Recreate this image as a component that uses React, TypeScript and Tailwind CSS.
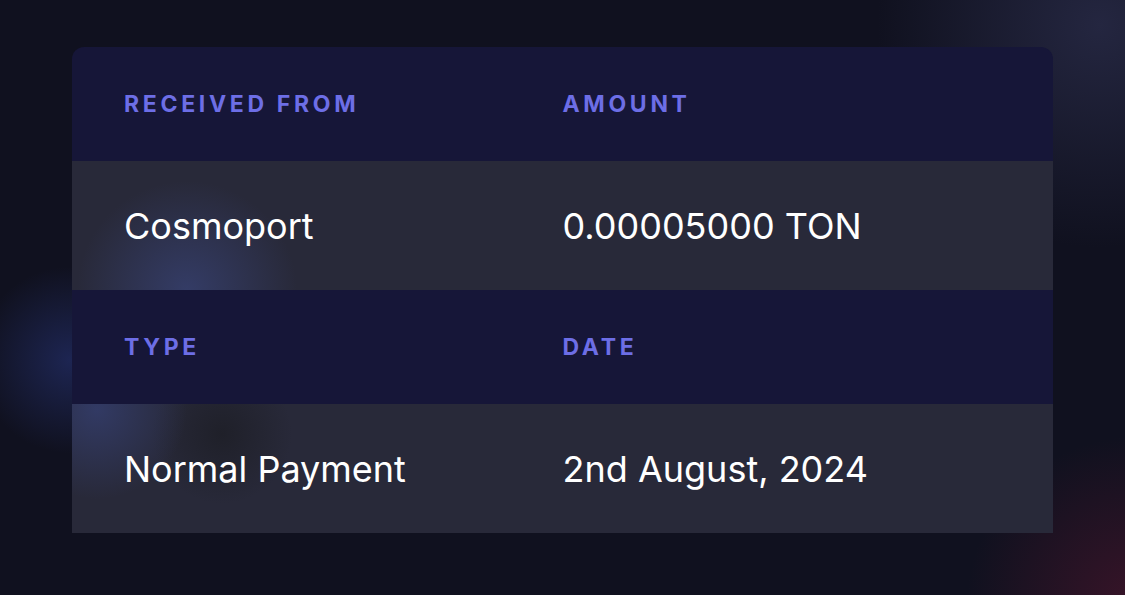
import React from 'react';

// --- Data ---
const sections = [
  {
    left: { label: 'Received From', value: 'Cosmoport' },
    right: { label: 'Amount', value: '0.00005000 TON' },
    glow: 'bg-[radial-gradient(circle_110px_at_115px_130px,_#343c66_0%,_transparent_100%)]',
  },
  {
    left: { label: 'Type', value: 'Normal Payment' },
    right: { label: 'Date', value: '2nd August, 2024' },
    glow: 'bg-[radial-gradient(circle_90px_at_25px_5px,_#323a64_0%,_transparent_100%),radial-gradient(circle_70px_at_150px_30px,_#1f2029_0%,_transparent_100%)]',
  },
];

const font = { fontFamily: 'Inter, "Noto Sans", sans-serif' };

// --- Rows ---
const HeaderRow = ({ left, right }: { left: string; right: string }) => (
  <div className="grid grid-cols-2 h-[114px] items-center bg-[#161638] px-[52px]">
    <span className="text-[23px] font-bold uppercase tracking-[0.16em] text-[#6d6ee6]">{left}</span>
    <span className="text-[23px] font-bold uppercase tracking-[0.16em] text-[#6d6ee6]">{right}</span>
  </div>
);

const ValueRow = ({ left, right, glow }: { left: string; right: string; glow: string }) => (
  <div className="bg-[#282939]">
    <div className={`grid grid-cols-2 h-[129px] items-center px-[52px] ${glow}`}>
      <span className="text-[36px] text-white">{left}</span>
      <span className="text-[36px] text-white">{right}</span>
    </div>
  </div>
);

// --- Page ---
export default function App() {
  return (
    <div
      className="relative h-[595px] w-[1125px] overflow-hidden bg-[#10111f] pt-[47px] pl-[72px]"
      style={font}
    >
      {/* background glows */}
      <div className="absolute -top-[200px] -right-[200px] h-[450px] w-[450px] rounded-full bg-[radial-gradient(circle,_#242640_0%,_transparent_70%)]" />
      <div className="absolute -bottom-[180px] -right-[180px] h-[340px] w-[340px] rounded-full bg-[radial-gradient(circle,_#381428_0%,_transparent_70%)]" />
      <div className="absolute top-[260px] left-[-30px] h-[200px] w-[200px] rounded-full bg-[radial-gradient(circle,_#1d2552_0%,_transparent_66%)]" />

      <div className="relative w-[981px] overflow-hidden rounded-t-[12px]">
        {sections.map((s, i) => (
          <div key={i}>
            <HeaderRow left={s.left.label} right={s.right.label} />
            <ValueRow left={s.left.value} right={s.right.value} glow={s.glow} />
          </div>
        ))}
      </div>
    </div>
  );
}
